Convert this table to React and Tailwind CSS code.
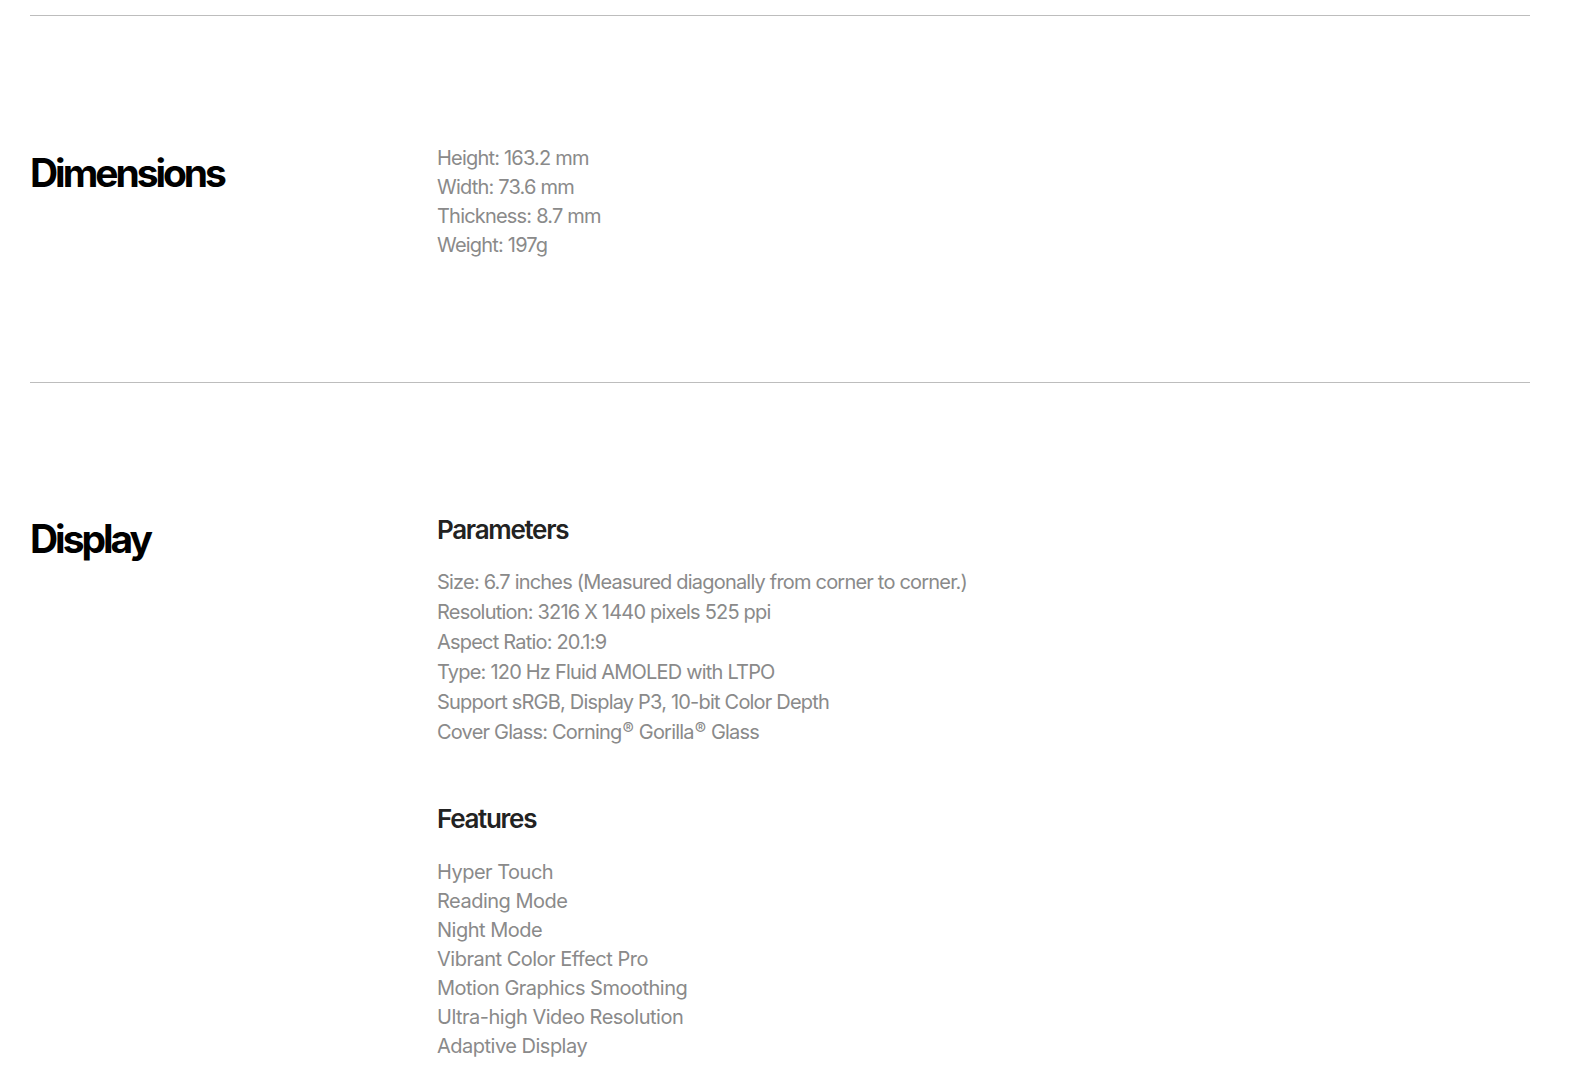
import React from 'react';

const DIMENSIONS = ['Height: 163.2 mm', 'Width: 73.6 mm', 'Thickness: 8.7 mm', 'Weight: 197g'];

const Reg = () => <span className="text-[17px] tracking-normal align-[4px] leading-none pl-[1px]">®</span>;

const PARAMETERS = [
    'Size: 6.7 inches (Measured diagonally from corner to corner.)',
    'Resolution: 3216 X 1440 pixels 525 ppi',
    'Aspect Ratio: 20.1:9',
    'Type: 120 Hz Fluid AMOLED with LTPO',
    'Support sRGB, Display P3, 10-bit Color Depth',
    <>Cover Glass: Corning<Reg /> Gorilla<Reg /> Glass</>
];

const FEATURES = [
    'Hyper Touch',
    'Reading Mode',
    'Night Mode',
    'Vibrant Color Effect Pro',
    'Motion Graphics Smoothing',
    'Ultra-high Video Resolution',
    'Adaptive Display'
];

function SpecList({ items, className }) {
    return (
        <ul className={`text-[20px] text-[#8a8a8a] ${className}`}>
            {items.map((item, i) => (
                <li key={i}>{item}</li>
            ))}
        </ul>
    );
}

export default function App() {
    return (
        <div className="bg-white min-h-screen pl-[30px] pr-[45px] pt-[15px] font-['Inter',sans-serif]">
            {/* Dimensions */}
            <section className="border-t border-[#bdbdbd] flex items-start pt-[128px] pb-[122px]">
                <h2 className="w-[407px] shrink-0 text-[39px] leading-[48px] font-bold tracking-[-0.078em] text-black mt-[5px]">
                    Dimensions
                </h2>
                <SpecList items={DIMENSIONS} className="leading-[29px] tracking-[-0.04em]" />
            </section>

            {/* Display */}
            <section className="border-t border-[#bdbdbd] flex items-start pt-[131px]">
                <h2 className="w-[407px] shrink-0 text-[39px] leading-[48px] font-bold tracking-[-0.078em] text-black mt-[1px]">
                    Display
                </h2>
                <div>
                    <h3 className="text-[26px] leading-[32px] font-semibold tracking-[-0.05em] text-[#222]">Parameters</h3>
                    <div className="mt-[21px]">
                        <SpecList items={PARAMETERS} className="leading-[30px] tracking-[-0.04em]" />
                    </div>
                    <h3 className="mt-[56px] text-[26px] leading-[32px] font-semibold tracking-[-0.05em] text-[#222]">Features</h3>
                    <div className="mt-[23px]">
                        <SpecList items={FEATURES} className="leading-[29px] tracking-[-0.025em]" />
                    </div>
                </div>
            </section>
        </div>
    );
}
